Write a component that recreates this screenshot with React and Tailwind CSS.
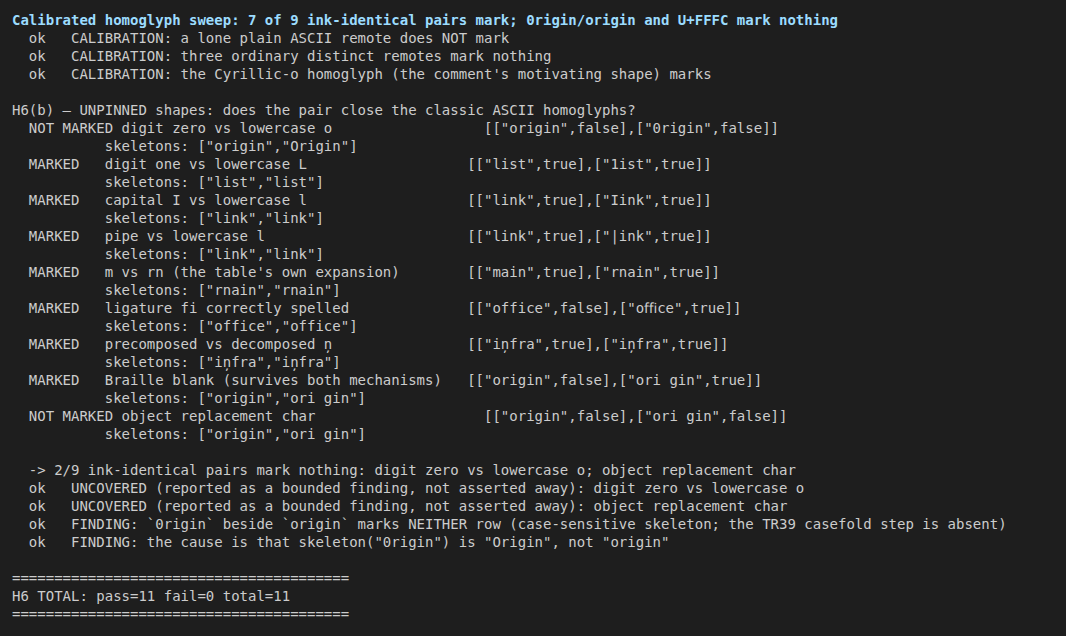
const heading =
  'Calibrated homoglyph sweep: 7 of 9 ink-identical pairs mark; 0rigin/origin and U+FFFC mark nothing';

// pad helper so the JSON column lines up like the real runner output
function row(label, desc, result) {
  const head = '  ' + label.padEnd(9, ' ') + desc;
  const lead = label.length > 9 ? head + ' ' : head;
  return lead.padEnd(label.length > 9 ? 56 : 54, ' ') + result;
}

const pairs = [
  ['NOT MARKED', 'digit zero vs lowercase o', '[["origin",false],["0rigin",false]]', '["origin","Origin"]'],
  ['MARKED', 'digit one vs lowercase L', '[["list",true],["1ist",true]]', '["list","list"]'],
  ['MARKED', 'capital I vs lowercase l', '[["link",true],["Iink",true]]', '["link","link"]'],
  ['MARKED', 'pipe vs lowercase l', '[["link",true],["|ink",true]]', '["link","link"]'],
  ['MARKED', "m vs rn (the table's own expansion)", '[["main",true],["rnain",true]]', '["rnain","rnain"]'],
  ['MARKED', 'ligature fi correctly spelled', '[["office",false],["oﬃce",true]]', '["office","office"]'],
  ['MARKED', 'precomposed vs decomposed ņ', '[["iņfra",true],["iņfra",true]]', '["iņfra","iņfra"]'],
  ['MARKED', 'Braille blank (survives both mechanisms)', '[["origin",false],["ori gin",true]]', '["origin","ori gin"]'],
  ['NOT MARKED', 'object replacement char', '[["origin",false],["ori gin",false]]', '["origin","ori gin"]'],
];

const lines = [
  '  ok   CALIBRATION: a lone plain ASCII remote does NOT mark',
  '  ok   CALIBRATION: three ordinary distinct remotes mark nothing',
  "  ok   CALIBRATION: the Cyrillic-o homoglyph (the comment's motivating shape) marks",
  '',
  'H6(b) — UNPINNED shapes: does the pair close the classic ASCII homoglyphs?',
  ...pairs.flatMap(([label, desc, result, skel]) => [
    label === 'NOT MARKED' ? '  NOT MARKED ' + desc.padEnd(43, ' ') + result : row(label, desc, result),
    '           skeletons: ' + skel,
  ]),
  '',
  '  -> 2/9 ink-identical pairs mark nothing: digit zero vs lowercase o; object replacement char',
  '  ok   UNCOVERED (reported as a bounded finding, not asserted away): digit zero vs lowercase o',
  '  ok   UNCOVERED (reported as a bounded finding, not asserted away): object replacement char',
  '  ok   FINDING: `0rigin` beside `origin` marks NEITHER row (case-sensitive skeleton; the TR39 casefold step is absent)',
  '  ok   FINDING: the cause is that skeleton("0rigin") is "Origin", not "origin"',
  '',
  '========================================',
  'H6 TOTAL: pass=11 fail=0 total=11',
  '========================================',
];

export default function App() {
  return (
    <div
      className="w-[1066px] h-[636px] overflow-hidden bg-[#1e1e1e] pt-[11px] px-3 text-[14px] leading-[18px] text-[#cccccc]"
      style={{ fontFamily: '"DejaVu Sans Mono", monospace' }}
    >
      <div className="whitespace-pre font-bold text-[#9cdcfe]">{heading}</div>
      {lines.map((line, i) => (
        <div key={i} className="whitespace-pre h-[18px]">
          {line}
        </div>
      ))}
    </div>
  );
}
